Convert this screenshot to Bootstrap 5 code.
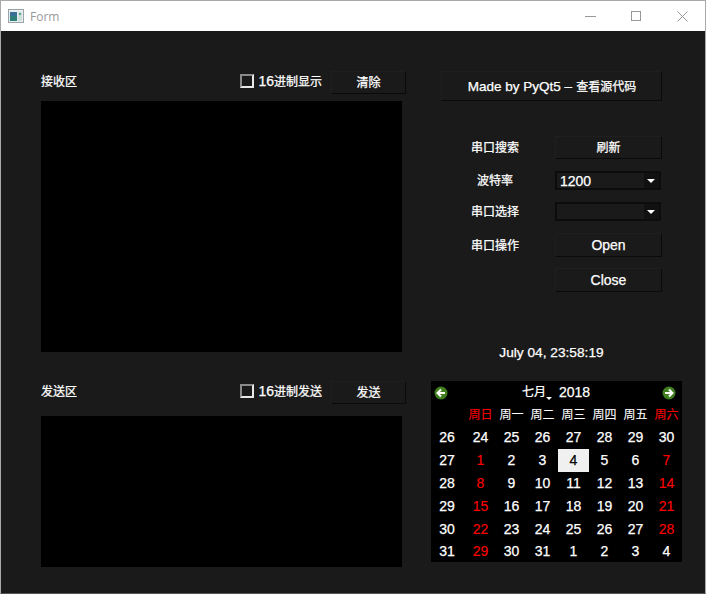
<!DOCTYPE html>
<html lang="zh-CN">
<head>
  <meta charset="UTF-8">
  <meta name="viewport" content="width=device-width, initial-scale=1">
  <title>Form</title>
  <link href="https://cdn.jsdelivr.net/npm/bootstrap@5.3.3/dist/css/bootstrap.min.css" rel="stylesheet">
  <style>
    html, body { height: 100%; margin: 0; background: #1a1a1a; }
    body { font: 12px/1.2 "Liberation Sans", "Noto Sans CJK SC", sans-serif; color: #fff; }
    .form-body { -webkit-text-stroke: .25px; }
    .form-win { width: 706px; height: 594px; border: 1px solid #a9a9a9; border-bottom-color: #555; display: flex; flex-direction: column; overflow: hidden; }
    .title-strip { height: 30px; flex: none; background: #fff; color: #999; font: 12px "Open Sans", sans-serif; padding-left: 7px; }
    .title-strip svg.app-icon { margin-right: 6px; }
    .title-strip .ctl { width: 46px; height: 30px; display: flex; align-items: center; justify-content: center; }
    .form-body { flex: 1; background: #1a1a1a; padding: 40px 0 0 40px; }
    .left-col { width: 365px; flex: none; }
    .right-col { width: 251px; flex: none; margin-left: 25px; }
    .top-row { height: 23px; }
    .hex-check { margin-left: auto; margin-right: 9px; margin-bottom: 2px; gap: 4px; }
    .box-check { width: 14px; height: 14px; flex: none; border: 2px solid; border-color: #8a8a8a #e8e8e8 #e8e8e8 #8a8a8a; background: #1a1a1a; }
    .flat-btn { display: flex; align-items: center; justify-content: center; padding: 0; color: #fff; background: #1a1a1a; border: 1px solid; border-color: #1f1f1f #0a0a0a #0a0a0a #1f1f1f; border-radius: 0; font-size: 12px; line-height: 1; }
    .flat-btn:hover { color: #fff; background: #1a1a1a; }
    .lat, .flat-btn.lat { font-size: 14px; }
    .btn-small { width: 75px; height: 23px; }
    .btn-made { width: 221px; height: 30px; margin-left: 10px; gap: 4px; padding-left: 1px; padding-top: 2px; }
    .btn-made .lat { font-size: 13.5px; }
    .data-pane { width: 361px; background: #000; }
    .pane-recv { height: 251px; margin-top: 7px; }
    .pane-send { height: 151px; margin-top: 12px; }
    .send-row { margin-top: 29px; }
    .port-grid { margin: 35px 0 0 10px; width: 221px; display: grid; grid-template-columns: 108px 107px; grid-template-rows: 23px 19px 19px 24px 24px; gap: 12px 6px; align-items: center; text-align: center; }
    .port-grid > span { padding-top: 2px; }
    .h-23 { height: 23px; }
    .h-24 { height: 24px; }
    .w-full { width: 107px; }
    .close-btn { align-self: start; margin-top: -1px; }
    .combo { width: 106px; height: 19px; background: #1a1a1a; border: 2px solid #0c0c0c; display: flex; align-items: center; justify-content: space-between; padding-left: 3px; text-align: left; }
    .combo > span { padding-top: 1px; }
    .combo i { width: 15px; height: 15px; background: #111; display: flex; align-items: center; justify-content: center; padding-right: 2px; }
    .combo i::after { content: ""; border: 4px solid transparent; border-top: 4px solid #fff; border-bottom: 0; }
    .clock-text { height: 18px; margin-top: 51px; padding-right: 10px; text-align: center; font-size: 13.7px; line-height: 18px; }
    .cal-box { margin-top: 19px; height: 181px; background: #000; }
    .cal-head { height: 23px; padding: 0 6px 0 3px; }
    .cal-month { margin: 0 auto; gap: 13px; position: relative; left: 1px; }
    .cal-month b { position: absolute; left: 24px; top: 13px; border: 3px solid transparent; border-top: 3px solid #fff; border-bottom: 0; }
    .cal-grid { display: grid; grid-template-columns: 34px repeat(7, 31px); grid-template-rows: 22px repeat(5, 23px) 21px; text-align: center; align-items: center; font-size: 14px; }
    .cal-grid .wk { font-size: 12px; -webkit-text-stroke: .1px; }
    .cal-grid .rest { color: #f00; -webkit-text-stroke: .1px; }
    .cal-grid .today { background: #f0f0f0; color: #000; height: 23px; line-height: 23px; }
    .cal-grid .wkno { padding-right: 2px; }
  </style>
</head>
<body>
  <div class="form-win">
    <div class="title-strip d-flex align-items-center">
      <svg class="app-icon" width="16" height="14" viewBox="0 0 16 14">
        <rect x=".5" y=".5" width="15" height="13" fill="#e8eef0" stroke="#9aa3a8"/>
        <rect x="2" y="3" width="7" height="9" fill="#2f7f78"/>
        <rect x="2" y="3" width="7" height="4" fill="#3c6f96"/>
        <rect x="10" y="3" width="4" height="9" fill="#cfe0dc"/>
        <rect x="11" y="4" width="2" height="2" fill="#5aa08f"/>
      </svg>
      <span>Form</span>
      <div class="d-flex ms-auto">
        <div class="ctl"><svg width="11" height="11" viewBox="0 0 11 11"><path d="M0 5.5h11" stroke="#999"/></svg></div>
        <div class="ctl"><svg width="11" height="11" viewBox="0 0 11 11"><rect x=".5" y=".5" width="9" height="9" fill="none" stroke="#999"/></svg></div>
        <div class="ctl"><svg width="11" height="11" viewBox="0 0 11 11"><path d="M.5.5l10 10M10.500.5l-10 10" stroke="#999"/></svg></div>
      </div>
    </div>

    <div class="form-body d-flex">
      <!-- 收发区 -->
      <div class="left-col">
        <div class="top-row d-flex align-items-center">
          <span>接收区</span>
          <label class="hex-check d-flex align-items-center"><span class="box-check"></span><span><span class="lat">16</span>进制显示</span></label>
          <button type="button" class="btn flat-btn btn-small">清除</button>
        </div>
        <div class="data-pane pane-recv"></div>

        <div class="top-row send-row d-flex align-items-center">
          <span>发送区</span>
          <label class="hex-check d-flex align-items-center"><span class="box-check"></span><span><span class="lat">16</span>进制发送</span></label>
          <button type="button" class="btn flat-btn btn-small">发送</button>
        </div>
        <div class="data-pane pane-send"></div>
      </div>

      <!-- 串口设置 -->
      <div class="right-col">
        <button type="button" class="btn flat-btn btn-made"><span class="lat">Made by PyQt5 –</span><span>查看源代码</span></button>

        <div class="port-grid">
          <span>串口搜索</span>
          <button type="button" class="btn flat-btn w-full h-23">刷新</button>
          <span>波特率</span>
          <div class="combo lat"><span>1200</span><i></i></div>
          <span>串口选择</span>
          <div class="combo"><span></span><i></i></div>
          <span>串口操作</span>
          <button type="button" class="btn flat-btn w-full h-24 lat">Open</button>
          <span></span>
          <button type="button" class="btn flat-btn w-full h-24 lat close-btn">Close</button>
        </div>

        <div class="clock-text">July 04, 23:58:19</div>

        <div class="cal-box">
          <div class="cal-head d-flex align-items-center">
            <svg width="14" height="14" viewBox="0 0 14 14"><circle cx="7" cy="7" r="6.500" fill="#3f7f1f"/><path d="M11 7H4M7 3.500L3.500 7 7 10.500" fill="none" stroke="#fff" stroke-width="2"/></svg>
            <div class="cal-month d-flex align-items-center"><span>七月</span><b></b><span class="lat">2018</span></div>
            <svg width="14" height="14" viewBox="0 0 14 14"><circle cx="7" cy="7" r="6.500" fill="#3f7f1f"/><path d="M3 7h7M7 3.500L10.500 7 7 10.500" fill="none" stroke="#fff" stroke-width="2"/></svg>
          </div>
          <div class="cal-grid" id="calGrid"></div>
        </div>
      </div>
    </div>
  </div>

  <script>
    const names = ['周日', '周一', '周二', '周三', '周四', '周五', '周六'];
    const weeks = [
      [26, 24, 25, 26, 27, 28, 29, 30],
      [27, 1, 2, 3, 4, 5, 6, 7],
      [28, 8, 9, 10, 11, 12, 13, 14],
      [29, 15, 16, 17, 18, 19, 20, 21],
      [30, 22, 23, 24, 25, 26, 27, 28],
      [31, 29, 30, 31, 1, 2, 3, 4]
    ];

    let html = '<span></span>';
    names.forEach((n, i) => {
      html += `<span class="wk ${i === 0 || i === 6 ? 'rest' : ''}">${n}</span>`;
    });
    weeks.forEach((w, r) => {
      w.forEach((d, c) => {
        let cls = c === 0 ? 'wkno' : '';
        // 周末红色, 首行和末行的周六除外
        if (r > 0 && (c === 1 || (c === 7 && r < 5))) cls = 'rest';
        if (r === 1 && c === 4) cls = 'today';
        html += `<span class="${cls}">${d}</span>`;
      });
    });
    document.getElementById('calGrid').innerHTML = html;
  </script>
  <script src="https://cdn.jsdelivr.net/npm/bootstrap@5.3.3/dist/js/bootstrap.bundle.min.js"></script>
</body>
</html>
